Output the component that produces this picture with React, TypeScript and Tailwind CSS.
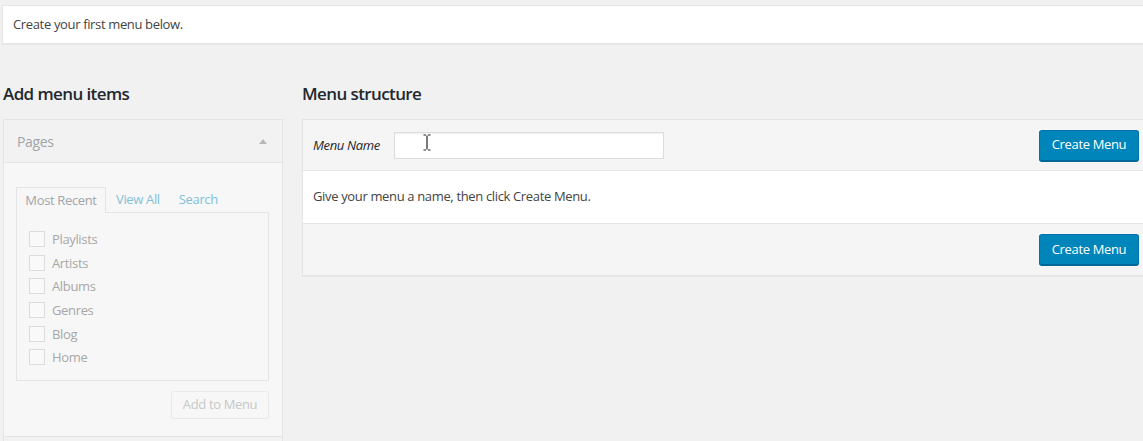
const pages = ["Playlists", "Artists", "Albums", "Genres", "Blog", "Home"];

const CreateMenuButton = () => (
  <button className="h-[31px] w-[100px] rounded-[3px] border border-[#0073aa] border-b-[#006799] bg-[#0085ba] text-[13px] text-white shadow-[0_1px_0_#006799]">
    Create Menu
  </button>
);

const App = () => {
  return (
    <div className="relative h-[441px] w-[1143px] overflow-hidden bg-[#f1f1f1] font-['Open_Sans',sans-serif] text-[13px] tracking-[-0.35px] text-[#444]">
      {/* Notice */}
      <div className="ml-[2px] mt-[5px] flex h-[39px] w-[1170px] items-center border border-[#e5e5e5] bg-white px-[10px] shadow-[0_1px_1px_rgba(0,0,0,0.04)]">
        Create your first menu below.
      </div>

      <div className="mt-[38px] flex gap-[19px] pl-[3px]">
        {/* Add menu items */}
        <div className="w-[280px] shrink-0">
          <h3 className="mb-[13px] h-[24px] text-[17px] font-semibold leading-[24px] tracking-[-0.6px] text-[#23282d]">Add menu items</h3>
          <div className="border border-[#e5e5e5] bg-[#f7f7f7]">
            <div className="flex h-[43px] items-center justify-between border-b border-[#e5e5e5] bg-[#f2f2f2] pl-[13px] pr-[15px]">
              <span className="text-[14px] text-[#a0a5aa]">Pages</span>
              <svg width="8" height="5" viewBox="0 0 8 5">
                <path d="M4 0L8 5H0z" fill="#b4b9be" />
              </svg>
            </div>
            <div className="px-[12px] pb-[17px] pt-[24px]">
              <div className="flex h-[25px] items-stretch">
                <div className="relative -mb-px flex w-[90px] items-center justify-center border border-b-0 border-[#e5e5e5] bg-[#f7f7f7] text-[#a0a5aa]">
                  Most Recent
                </div>
                <span className="flex items-center pl-[10px] text-[#80c0d9]">View All</span>
                <span className="flex items-center pl-[19px] text-[#80c0d9]">Search</span>
              </div>
              <div className="w-[253px] border border-[#e5e5e5] pb-[7px] pl-[12px] pt-[18px]">
                {pages.map((p) => (
                  <label key={p} className="flex h-[23.7px] items-start gap-[7px] text-[#a7a7a7]">
                    <span className="h-[16px] w-[16px] shrink-0 border border-[#dcdcdc] bg-[#f9f9f9]" />
                    <span className="-mt-[1px] leading-[18px]">{p}</span>
                  </label>
                ))}
              </div>
              <div className="mt-[10px] flex w-[253px] justify-end">
                <button className="h-[28px] w-[98px] rounded-[3px] border border-[#e8e8e8] bg-[#f7f7f7] text-[13px] text-[#c8c8c8]">
                  Add to Menu
                </button>
              </div>
            </div>
            <div className="h-[43px] border-t border-[#e5e5e5] bg-[#f2f2f2]" />
          </div>
        </div>

        {/* Menu structure */}
        <div className="w-[848px] shrink-0">
          <h3 className="mb-[13px] h-[24px] text-[17px] font-semibold leading-[24px] tracking-[-0.6px] text-[#23282d]">Menu structure</h3>
          <div className="border border-[#e5e5e5] bg-[#f5f5f5] shadow-[0_1px_1px_rgba(0,0,0,0.04)]">
            <div className="flex h-[51px] items-center justify-between border-b border-[#e5e5e5] px-[10px]">
              <div className="flex items-center">
                <span className="mt-[2px] w-[81px] italic text-[#23282d]">Menu Name</span>
                <div className="relative h-[27px] w-[270px] border border-[#ddd] bg-white shadow-[inset_0_1px_2px_rgba(0,0,0,0.07)]">
                  <svg className="absolute left-[28px] top-[1px]" width="8" height="17" viewBox="0 0 8 17">
                    <path d="M0.5 1H3M5 1H7.5M4 1.5V15.5M0.5 16H3M5 16H7.5" stroke="#222" strokeWidth="1.2" fill="none" />
                  </svg>
                </div>
              </div>
              <CreateMenuButton />
            </div>
            <div className="flex h-[53px] items-center border-b border-[#e5e5e5] bg-white px-[10px]">
              Give your menu a name, then click Create Menu.
            </div>
            <div className="flex h-[51px] items-center justify-end px-[10px]">
              <CreateMenuButton />
            </div>
          </div>
        </div>
      </div>
    </div>
  );
};

export default App;
